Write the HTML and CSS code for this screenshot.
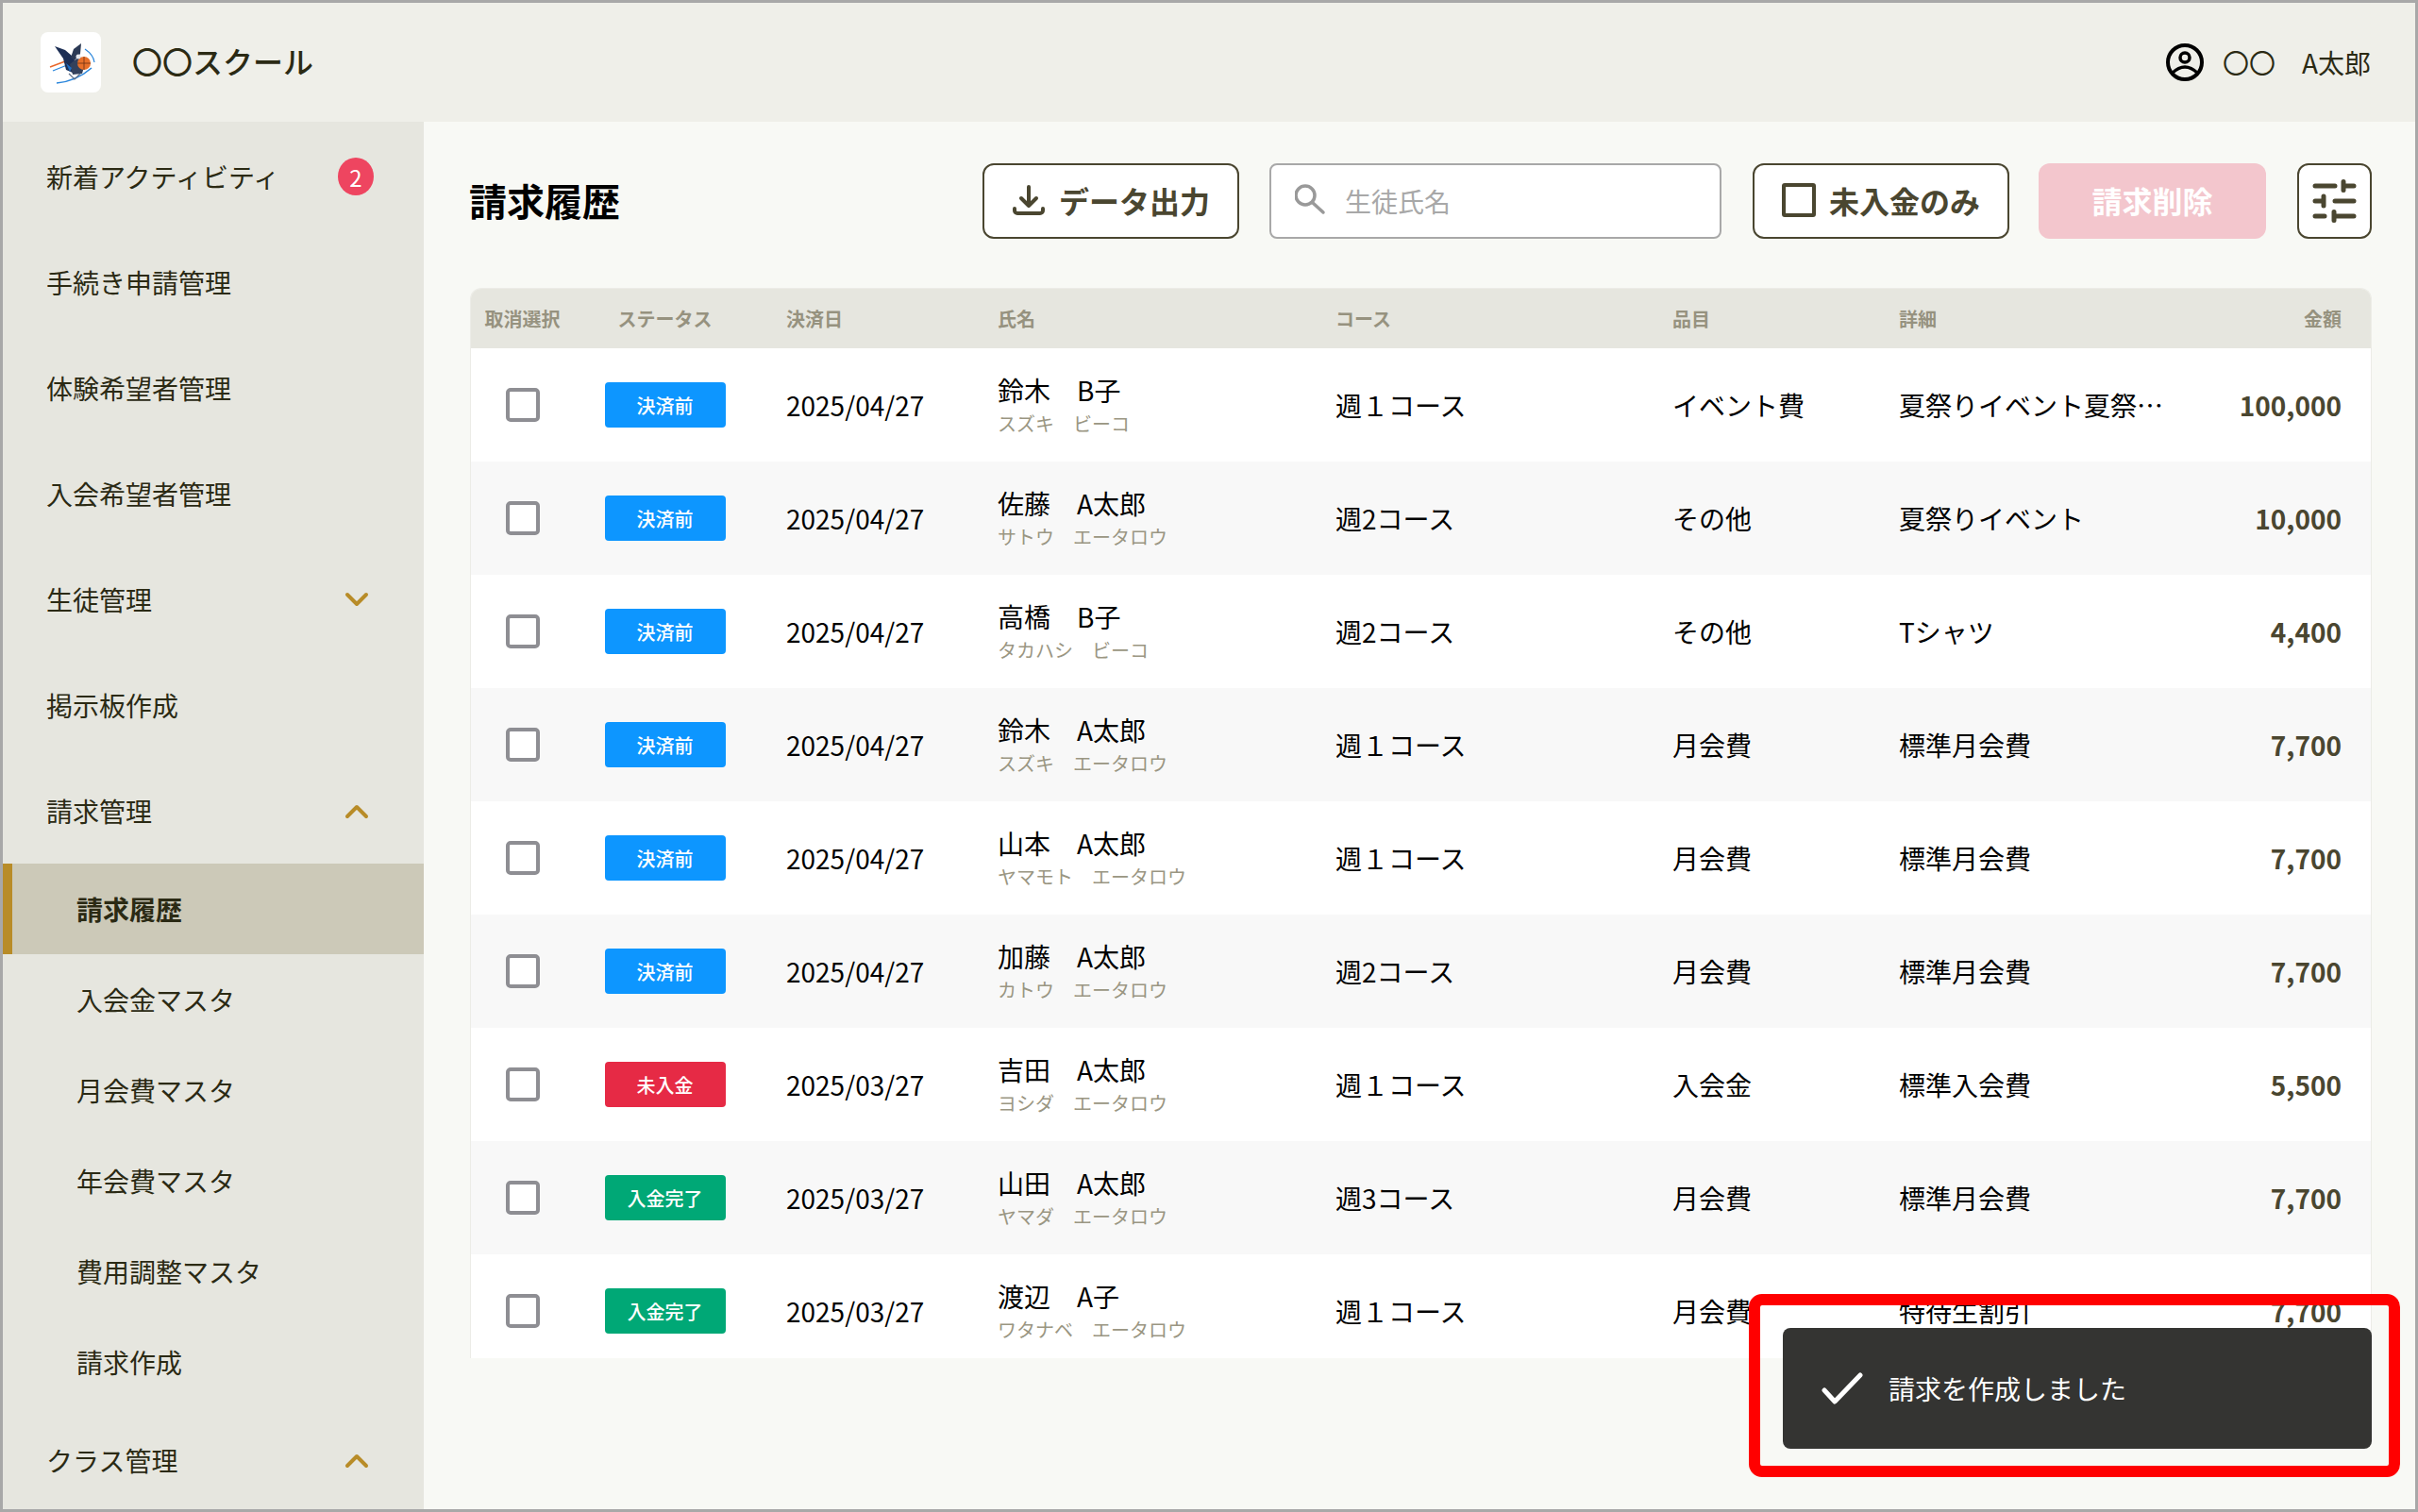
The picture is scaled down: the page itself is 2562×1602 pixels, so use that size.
FILE: index.html
```html
<!DOCTYPE html>
<html lang="ja">
<head>
    <meta charset="UTF-8">
    <meta name="viewport" content="width=device-width, initial-scale=1.0">
    <title>請求履歴</title>
    <link rel="stylesheet" href="styles.css">
</head>
<body>
<div class="frame">
    <!-- Header -->
    <header class="topbar">
        <div class="logo">
            <svg width="64" height="64" viewBox="0 0 64 64">
                <path d="M17 54 Q38 52 54 38" fill="none" stroke="#2a86dc" stroke-width="1.6"/>
                <path d="M47 18 Q56 24 57 32" fill="none" stroke="#2a86dc" stroke-width="1.2"/>
                <path d="M10 37 L26 31" stroke="#e8662a" stroke-width="1.4"/>
                <path d="M13 41 L28 35" stroke="#2a86dc" stroke-width="1.2"/>
                <path d="M15 15 L26 19 L33 25 L38 33 L34 43 L27 40 L24 28 Z" fill="#1d2f55"/>
                <path d="M43 12 L42 23 L36 30 L32 27 L35 18 Z" fill="#2c3a55"/>
                <path d="M31 34 L41 26 L48 30 L44 44 L34 45 Z" fill="#33415c"/>
                <path d="M27 33 L33 38 L31 42 Z" fill="#1f6fc4"/>
                <circle cx="46" cy="33" r="7" fill="#e8702a"/>
                <path d="M39 33 H53 M46 26 V40" stroke="#6b3114" stroke-width="0.8"/>
                <circle cx="40" cy="26" r="2.5" fill="#e6e8ee"/>
                <path d="M30 44 L36 50 L42 44" fill="none" stroke="#5c6b84" stroke-width="1.2"/>
            </svg>
        </div>
        <div class="school-name">〇〇スクール</div>
        <div class="user">
            <svg width="40" height="40" viewBox="0 0 40 40" fill="none" stroke="#000" stroke-width="4">
                <circle cx="20" cy="20" r="18"/>
                <circle cx="20" cy="15" r="5" stroke-width="3.5"/>
                <path d="M6.5 31.5 Q20 18.5 33.5 31.5" stroke-width="3.5"/>
            </svg>
            <span class="user-name">〇〇　A太郎</span>
        </div>
    </header>

    <div class="layout">
        <!-- Sidebar -->
        <nav class="sidebar">
            <a class="nav-item">新着アクティビティ<span class="count">2</span></a>
            <a class="nav-item">手続き申請管理</a>
            <a class="nav-item">体験希望者管理</a>
            <a class="nav-item">入会希望者管理</a>
            <a class="nav-item">生徒管理
                <svg class="chevron" width="26" height="17" viewBox="0 0 26 17"><path d="M3 3 L13 13 L23 3"/></svg>
            </a>
            <a class="nav-item">掲示板作成</a>
            <a class="nav-item">請求管理
                <svg class="chevron" width="26" height="17" viewBox="0 0 26 17"><path d="M3 14 L13 4 L23 14"/></svg>
            </a>
            <a class="sub-item active">請求履歴</a>
            <a class="sub-item">入会金マスタ</a>
            <a class="sub-item">月会費マスタ</a>
            <a class="sub-item">年会費マスタ</a>
            <a class="sub-item">費用調整マスタ</a>
            <a class="sub-item">請求作成</a>
            <a class="nav-item">クラス管理
                <svg class="chevron" width="26" height="17" viewBox="0 0 26 17"><path d="M3 14 L13 4 L23 14"/></svg>
            </a>
        </nav>

        <!-- Main -->
        <main class="main">
            <div class="toolbar">
                <h1 class="page-title">請求履歴</h1>
                <button class="btn btn-export">
                    <svg width="36" height="36" viewBox="0 0 36 36" fill="none" stroke="#4a4630" stroke-width="4" stroke-linecap="round" stroke-linejoin="round">
                        <path d="M18 4 V24 M10 16 L18 24 L26 16"/>
                        <path d="M3 27 V29 A3 3 0 0 0 6 32 H30 A3 3 0 0 0 33 29 V27"/>
                    </svg>
                    データ出力
                </button>
                <div class="search">
                    <svg width="36" height="36" viewBox="0 0 36 36" fill="none" stroke="#999" stroke-width="3.5" stroke-linecap="round">
                        <circle cx="11" cy="12" r="10"/>
                        <path d="M18.5 19.5 L30 30"/>
                    </svg>
                    <span class="placeholder">生徒氏名</span>
                </div>
                <button class="btn btn-unpaid"><span class="box"></span>未入金のみ</button>
                <button class="btn btn-delete">請求削除</button>
                <button class="btn btn-filter">
                    <svg width="48" height="48" viewBox="0 0 48 48" fill="none" stroke="#4a4630" stroke-width="5" stroke-linecap="round">
                        <path d="M3 8 H24 M33 3.5 V12.5 M33 8 H44"/>
                        <path d="M3 24 H12 M12 19 V29 M24 24 H44"/>
                        <path d="M3 40 H13 M23 35.5 V44.5 M23 40 H44"/>
                    </svg>
                </button>
            </div>

            <div class="table-wrap">
                <table class="billing">
                    <thead>
                        <tr>
                            <th class="col-check">取消選択</th>
                            <th class="col-status">ステータス</th>
                            <th class="col-date">決済日</th>
                            <th class="col-name">氏名</th>
                            <th class="col-course">コース</th>
                            <th class="col-item">品目</th>
                            <th class="col-detail">詳細</th>
                            <th class="col-amount">金額</th>
                        </tr>
                    </thead>
                    <tbody>
                        <tr>
                            <td class="col-check"><span class="box grey"></span></td>
                            <td class="col-status"><span class="status before">決済前</span></td>
                            <td>2025/04/27</td>
                            <td><div class="name">鈴木　B子</div><div class="kana">スズキ　ビーコ</div></td>
                            <td>週１コース</td>
                            <td>イベント費</td>
                            <td><div class="detail">夏祭りイベント夏祭…</div></td>
                            <td class="col-amount">100,000</td>
                        </tr>
                        <tr>
                            <td class="col-check"><span class="box grey"></span></td>
                            <td class="col-status"><span class="status before">決済前</span></td>
                            <td>2025/04/27</td>
                            <td><div class="name">佐藤　A太郎</div><div class="kana">サトウ　エータロウ</div></td>
                            <td>週2コース</td>
                            <td>その他</td>
                            <td><div class="detail">夏祭りイベント</div></td>
                            <td class="col-amount">10,000</td>
                        </tr>
                        <tr>
                            <td class="col-check"><span class="box grey"></span></td>
                            <td class="col-status"><span class="status before">決済前</span></td>
                            <td>2025/04/27</td>
                            <td><div class="name">高橋　B子</div><div class="kana">タカハシ　ビーコ</div></td>
                            <td>週2コース</td>
                            <td>その他</td>
                            <td><div class="detail">Tシャツ</div></td>
                            <td class="col-amount">4,400</td>
                        </tr>
                        <tr>
                            <td class="col-check"><span class="box grey"></span></td>
                            <td class="col-status"><span class="status before">決済前</span></td>
                            <td>2025/04/27</td>
                            <td><div class="name">鈴木　A太郎</div><div class="kana">スズキ　エータロウ</div></td>
                            <td>週１コース</td>
                            <td>月会費</td>
                            <td><div class="detail">標準月会費</div></td>
                            <td class="col-amount">7,700</td>
                        </tr>
                        <tr>
                            <td class="col-check"><span class="box grey"></span></td>
                            <td class="col-status"><span class="status before">決済前</span></td>
                            <td>2025/04/27</td>
                            <td><div class="name">山本　A太郎</div><div class="kana">ヤマモト　エータロウ</div></td>
                            <td>週１コース</td>
                            <td>月会費</td>
                            <td><div class="detail">標準月会費</div></td>
                            <td class="col-amount">7,700</td>
                        </tr>
                        <tr>
                            <td class="col-check"><span class="box grey"></span></td>
                            <td class="col-status"><span class="status before">決済前</span></td>
                            <td>2025/04/27</td>
                            <td><div class="name">加藤　A太郎</div><div class="kana">カトウ　エータロウ</div></td>
                            <td>週2コース</td>
                            <td>月会費</td>
                            <td><div class="detail">標準月会費</div></td>
                            <td class="col-amount">7,700</td>
                        </tr>
                        <tr>
                            <td class="col-check"><span class="box grey"></span></td>
                            <td class="col-status"><span class="status unpaid">未入金</span></td>
                            <td>2025/03/27</td>
                            <td><div class="name">吉田　A太郎</div><div class="kana">ヨシダ　エータロウ</div></td>
                            <td>週１コース</td>
                            <td>入会金</td>
                            <td><div class="detail">標準入会費</div></td>
                            <td class="col-amount">5,500</td>
                        </tr>
                        <tr>
                            <td class="col-check"><span class="box grey"></span></td>
                            <td class="col-status"><span class="status paid">入金完了</span></td>
                            <td>2025/03/27</td>
                            <td><div class="name">山田　A太郎</div><div class="kana">ヤマダ　エータロウ</div></td>
                            <td>週3コース</td>
                            <td>月会費</td>
                            <td><div class="detail">標準月会費</div></td>
                            <td class="col-amount">7,700</td>
                        </tr>
                        <tr>
                            <td class="col-check"><span class="box grey"></span></td>
                            <td class="col-status"><span class="status paid">入金完了</span></td>
                            <td>2025/03/27</td>
                            <td><div class="name">渡辺　A子</div><div class="kana">ワタナベ　エータロウ</div></td>
                            <td>週１コース</td>
                            <td>月会費</td>
                            <td><div class="detail">特待生割引</div></td>
                            <td class="col-amount">7,700</td>
                        </tr>
                    </tbody>
                </table>
            </div>

            <!-- Toast with the red annotation round it -->
            <div class="annotation">
                <div class="toast">
                    <svg width="44" height="34" viewBox="0 0 44 34" fill="none" stroke="#fff" stroke-width="5" stroke-linecap="round" stroke-linejoin="round">
                        <path d="M3 19 L14 31 L41 3"/>
                    </svg>
                    <span>請求を作成しました</span>
                </div>
            </div>
        </main>
    </div>
</div>
</body>
</html>
```

FILE: styles.css
```css
/* General Styles */
* {
    box-sizing: border-box;
}

body {
    margin: 0;
    padding: 0;
    font-family: "Noto Sans CJK JP", sans-serif;
    color: #2b2a14;
}

.frame {
    display: flex;
    flex-direction: column;
    width: 2562px;
    height: 1602px;
    border: 3px solid #a8a8a8;
    overflow: hidden;
}

/* Header */
.topbar {
    display: flex;
    align-items: center;
    flex: none;
    height: 126px;
    padding: 0 47px 0 40px;
    background-color: #efefe9;
}

.logo {
    width: 64px;
    height: 64px;
    background-color: white;
    border-radius: 8px;
}

.school-name {
    margin: 0 0 5px 33px;
    font-size: 32px;
    font-weight: 500;
}

.user {
    display: flex;
    align-items: center;
    gap: 20px;
    margin-left: auto;
}

.user-name {
    font-size: 28px;
}

.layout {
    display: flex;
    flex: 1;
    min-height: 0;
}

/* Sidebar */
.sidebar {
    flex: none;
    width: 446px;
    padding-top: 2px;
    background-color: #e6e6df;
    overflow: hidden;
}

.nav-item {
    display: flex;
    justify-content: space-between;
    align-items: center;
    height: 112px;
    padding: 0 58px 0 46px;
    font-size: 28px;
}

.sub-item {
    display: flex;
    align-items: center;
    height: 96px;
    padding-left: 78px;
    font-size: 28px;
}

.sub-item.active {
    padding-left: 68px;
    border-left: 10px solid #b88c28;
    background-color: #ccc9b8;
    font-weight: 700;
}

.count {
    display: flex;
    justify-content: center;
    align-items: center;
    width: 38px;
    height: 40px;
    margin-right: -5px;
    border-radius: 50%;
    background-color: #ee4560;
    color: white;
    font-size: 24px;
}

.chevron {
    fill: none;
    stroke: #b88c28;
    stroke-width: 4;
    stroke-linecap: round;
    stroke-linejoin: round;
}

/* Main */
.main {
    position: relative;
    flex: 1;
    padding: 44px 46px 0 49px;
    background-color: #f8f9f5;
}

.toolbar {
    display: flex;
    align-items: center;
    gap: 33px;
    height: 80px;
}

.page-title {
    margin: 0 auto 2px -1px;
    font-size: 40px;
    font-weight: 700;
    color: #000;
}

.btn {
    display: flex;
    justify-content: center;
    align-items: center;
    height: 80px;
    padding: 0 0 2px;
    border: 2px solid #4a4630;
    border-radius: 12px;
    background-color: white;
    color: #4a4630;
    font-family: inherit;
    font-size: 32px;
    font-weight: 700;
}

.btn-export {
    gap: 14px;
    width: 272px;
    margin-right: -1px;
}

.btn-unpaid {
    gap: 14px;
    width: 272px;
    margin-right: -2px;
}

.btn-delete {
    width: 241px;
    border: none;
    background-color: #f3c6cd;
    color: white;
}

.btn-filter {
    width: 79px;
    padding: 0;
}

.box {
    display: inline-block;
    width: 36px;
    height: 36px;
    border: 4px solid #4a4630;
    border-radius: 3px;
}

.box.grey {
    display: block;
    margin: 0 auto;
    border-color: #8e8e93;
    border-radius: 5px;
    background-color: white;
}

.search {
    display: flex;
    align-items: center;
    gap: 17px;
    width: 479px;
    height: 80px;
    padding-left: 25px;
    border: 2px solid #a8a8a8;
    border-radius: 8px;
    background-color: white;
}

.placeholder {
    font-size: 28px;
    color: #a8a8a8;
}

/* Table */
.table-wrap {
    height: 1134px;
    margin-top: 52px;
    border: 1px solid #ecece7;
    border-bottom: none;
    border-radius: 12px 12px 0 0;
    overflow: hidden;
}

.billing {
    width: 2013px;
    table-layout: fixed;
    border-collapse: separate;
    border-spacing: 0;
}

.billing th {
    height: 63px;
    padding: 0 0 0 32px;
    background-color: #e6e6df;
    text-align: left;
    font-size: 20px;
    font-weight: 700;
    color: #96927f;
}

.billing td {
    height: 120px;
    padding: 0 32px;
    font-size: 28px;
    color: #000;
    background-color: white;
}

.billing tbody tr:nth-child(even) td {
    background-color: #f8f8f8;
}

.billing th.col-check, .billing td.col-check {
    width: 109px;
    padding: 0;
    text-align: center;
}

.billing th.col-status, .billing td.col-status {
    width: 193px;
    padding: 0;
    text-align: center;
}

.billing th.col-date {
    width: 224px;
}

.billing th.col-name {
    width: 358px;
}

.billing th.col-course {
    width: 357px;
}

.billing th.col-item {
    width: 240px;
}

.billing th.col-detail {
    width: 356px;
}

.billing th.col-amount {
    width: 176px;
    padding: 0 31px 0 0;
    text-align: right;
}

.billing td.col-amount {
    padding: 0 31px 0 0;
    text-align: right;
    font-weight: 700;
    color: #4a4630;
}

.name {
    padding-bottom: 4px;
    line-height: 36px;
}

.kana {
    line-height: 28px;
    font-size: 20px;
    color: #9a9682;
}

.detail {
    white-space: nowrap;
}

.status {
    display: inline-flex;
    justify-content: center;
    align-items: center;
    width: 128px;
    height: 48px;
    border-radius: 4px;
    color: white;
    font-size: 20px;
    font-weight: 500;
    vertical-align: middle;
}

.status.before {
    background-color: #0d96ff;
}

.status.unpaid {
    background-color: #e62a45;
}

.status.paid {
    background-color: #00a876;
}

/* Toast */
.annotation {
    position: absolute;
    right: 16px;
    bottom: 34px;
    width: 690px;
    height: 194px;
    padding: 24px 18px 18px 24px;
    border: 12px solid #ff0000;
    border-radius: 14px;
}

.toast {
    display: flex;
    align-items: center;
    gap: 27px;
    height: 100%;
    padding-left: 41px;
    border-radius: 8px;
    background-color: #343432;
    color: white;
    font-size: 28px;
}
```
